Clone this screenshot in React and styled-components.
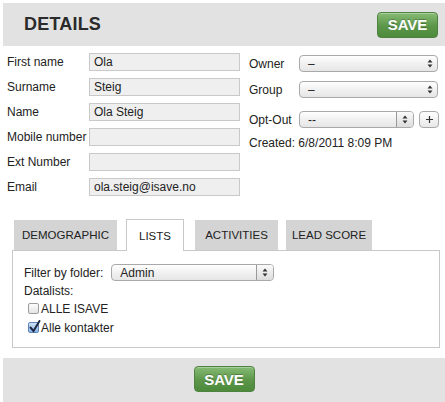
import styled, { createGlobalStyle } from 'styled-components';

const GlobalStyle = createGlobalStyle`
  body {
    margin: 0;
    background: #fff;
    font-family: "Liberation Sans", Arial, sans-serif;
    font-size: 12px;
    color: #222;
  }
`;

const Page = styled.div`
  width: 442px;
  padding: 3px 0 0 3px;
`;

const Bar = styled.div`
  height: ${({ $h }) => $h}px;
  background: #e2e2e2;
  display: flex;
  align-items: ${({ $top }) => ($top ? 'flex-start' : 'center')};
  justify-content: ${({ $center }) => ($center ? 'center' : 'space-between')};
  padding: ${({ $pad }) => $pad};
  box-sizing: border-box;
`;

const Title = styled.h1`
  margin: 0;
  font-size: 18px;
  font-weight: bold;
  color: #2b2b2b;
  letter-spacing: 0.2px;
`;

const SaveButton = styled.button`
  width: 61px;
  height: 26px;
  border: 1px solid #4e823f;
  border-radius: 4px;
  background: linear-gradient(#86bb74, #5c9649 55%, #4d8a3c);
  color: #fff;
  font-family: "Liberation Sans", Arial, sans-serif;
  font-size: 15px;
  font-weight: bold;
  text-shadow: 0 -1px 0 rgba(0, 0, 0, 0.25);
  box-shadow: inset 0 1px 0 rgba(255, 255, 255, 0.3);
  padding: 0;
`;

const FormArea = styled.div`
  display: flex;
  padding-top: 7px;
  height: 166px;
`;

const LeftCol = styled.div`
  width: 242px;
  padding-left: 4px;
  display: flex;
  flex-direction: column;
  gap: 7px;
`;

const FieldRow = styled.div`
  display: flex;
  align-items: center;
  height: 18px;
`;

const Label = styled.span`
  width: ${({ $w }) => $w}px;
  flex-shrink: 0;
  font-size: 12px;
  color: #222;
  white-space: nowrap;
`;

const TextInput = styled.input`
  width: 151px;
  height: 18px;
  box-sizing: border-box;
  border: 1px solid #c9c9c9;
  background: #efefef;
  font-family: "Liberation Sans", Arial, sans-serif;
  font-size: 12px;
  color: #222;
  padding: 0 4px;
  outline: none;
`;

const RightCol = styled.div`
  display: flex;
  flex-direction: column;
  padding-top: 2px;
`;

const SelectRow = styled.div`
  display: flex;
  align-items: center;
  height: 17px;
  margin-bottom: ${({ $mb }) => $mb}px;
`;

const FakeSelect = styled.div`
  width: ${({ $w }) => $w}px;
  height: 17px;
  box-sizing: border-box;
  border: 1px solid #a9a9a9;
  border-radius: 4px;
  background: linear-gradient(#ffffff, #f1f1f1 50%, #e6e6e6);
  display: flex;
  align-items: center;
  font-size: 12px;
  color: #222;
  padding-left: 8px;
  overflow: hidden;
`;

const SelectValue = styled.span`
  flex: 1;
`;

const ArrowCell = styled.span`
  width: ${({ $split }) => ($split ? 16 : 14)}px;
  height: 100%;
  display: flex;
  align-items: center;
  justify-content: center;
  border-left: ${({ $split }) => ($split ? '1px solid #9a9a9a' : 'none')};
  background: ${({ $split }) => ($split ? 'linear-gradient(#fafafa, #dcdcdc)' : 'transparent')};
`;

const PlusButton = styled.button`
  width: 20px;
  height: 17px;
  margin-left: 5px;
  padding: 0;
  border: 1px solid #a9a9a9;
  border-radius: 4px;
  background: linear-gradient(#ffffff, #e8e8e8);
  display: flex;
  align-items: center;
  justify-content: center;
`;

const Created = styled.div`
  font-size: 12px;
  color: #222;
`;

const TabsWrap = styled.div`
  margin: 0 5px 0 9px;
`;

const TabStrip = styled.div`
  display: flex;
  align-items: flex-end;
  padding-left: 2px;
  height: 31px;
`;

const Tab = styled.div`
  height: ${({ $active }) => ($active ? 32 : 30)}px;
  width: ${({ $w }) => $w}px;
  box-sizing: border-box;
  margin-right: ${({ $gap }) => $gap}px;
  margin-bottom: ${({ $active }) => ($active ? -1 : 0)}px;
  background: ${({ $active }) => ($active ? '#fff' : '#d4d4d4')};
  border: ${({ $active }) => ($active ? '1px solid #c8c8c8' : 'none')};
  border-bottom: none;
  display: flex;
  align-items: center;
  justify-content: center;
  font-size: 11.5px;
  color: #222;
  position: relative;
  z-index: 1;
`;

const Panel = styled.div`
  height: 98px;
  box-sizing: border-box;
  border: 1px solid #c8c8c8;
  padding: 13px 0 0 11px;
`;

const FilterRow = styled.div`
  display: flex;
  align-items: center;
  gap: 8px;
`;

const SmallText = styled.div`
  margin-top: 3px;
  line-height: 15px;
`;

const CheckRow = styled.label`
  display: flex;
  align-items: center;
  height: 19px;
  padding-left: 4px;
  font-size: 12px;
`;

const Box = styled.span`
  width: 11px;
  height: 11px;
  box-sizing: border-box;
  border: 1px solid ${({ $on }) => ($on ? '#5a86b8' : '#9d9d9d')};
  border-radius: 2px;
  background: ${({ $on }) =>
    $on ? 'linear-gradient(#cfe2f7, #8db6e6)' : 'linear-gradient(#fdfdfd, #e4e4e4)'};
  margin-right: 2px;
  position: relative;
  flex-shrink: 0;
`;

const CheckMark = styled.svg`
  position: absolute;
  left: 0;
  top: -3px;
`;

const Spacer = styled.div`
  height: ${({ $h }) => $h}px;
`;

const Arrows = () => (
  <svg width="6" height="9" viewBox="0 0 6 9">
    <path d="M3 0.5 L5.5 3.5 H0.5 Z" fill="#333" />
    <path d="M3 8.5 L5.5 5.5 H0.5 Z" fill="#333" />
  </svg>
);

const Select = ({ w, value, split }) => (
  <FakeSelect $w={w}>
    <SelectValue>{value}</SelectValue>
    <ArrowCell $split={split}>
      <Arrows />
    </ArrowCell>
  </FakeSelect>
);

const Check = ({ on, children }) => (
  <CheckRow>
    <Box $on={on}>
      {on && (
        <CheckMark width="12" height="13" viewBox="0 0 12 13">
          <path d="M1.5 7.5 L4.5 11 L10.5 1" stroke="#1d2a44" strokeWidth="2" fill="none" strokeLinecap="round" />
        </CheckMark>
      )}
    </Box>
    {children}
  </CheckRow>
);

const fields = [
  ['First name', 'Ola'],
  ['Surname', 'Steig'],
  ['Name', 'Ola Steig'],
  ['Mobile number', ''],
  ['Ext Number', ''],
  ['Email', 'ola.steig@isave.no'],
];

const tabs = [
  { name: 'DEMOGRAPHIC', w: 103, gap: 9 },
  { name: 'LISTS', w: 58, gap: 11, active: true },
  { name: 'ACTIVITIES', w: 83, gap: 8 },
  { name: 'LEAD SCORE', w: 86, gap: 0 },
];

export default function App() {
  return (
    <Page>
      <GlobalStyle />
      <Bar $h={43} $pad="0 7px 0 21px">
        <Title>DETAILS</Title>
        <SaveButton>SAVE</SaveButton>
      </Bar>

      <FormArea>
        <LeftCol>
          {fields.map(([label, value]) => (
            <FieldRow key={label}>
              <Label $w={82}>{label}</Label>
              <TextInput defaultValue={value} />
            </FieldRow>
          ))}
        </LeftCol>
        <RightCol>
          <SelectRow $mb={9}>
            <Label $w={50}>Owner</Label>
            <Select w={139} value="–" />
          </SelectRow>
          <SelectRow $mb={13}>
            <Label $w={50}>Group</Label>
            <Select w={139} value="–" />
          </SelectRow>
          <SelectRow $mb={8}>
            <Label $w={50}>Opt-Out</Label>
            <Select w={115} value="--" split />
            <PlusButton>
              <svg width="9" height="9" viewBox="0 0 9 9">
                <path d="M4.5 1 V8 M1 4.5 H8" stroke="#333" strokeWidth="1.2" />
              </svg>
            </PlusButton>
          </SelectRow>
          <Created>Created: 6/8/2011 8:09 PM</Created>
        </RightCol>
      </FormArea>

      <TabsWrap>
        <TabStrip>
          {tabs.map((t) => (
            <Tab key={t.name} $w={t.w} $gap={t.gap} $active={t.active}>
              {t.name}
            </Tab>
          ))}
        </TabStrip>
        <Panel>
          <FilterRow>
            <span>Filter by folder:</span>
            <Select w={163} value="Admin" split />
          </FilterRow>
          <SmallText>Datalists:</SmallText>
          <Check>ALLE ISAVE</Check>
          <Check on>Alle kontakter</Check>
        </Panel>
      </TabsWrap>

      <Spacer $h={10} />
      <Bar $h={44} $center $top $pad="8px 0 0 0">
        <SaveButton>SAVE</SaveButton>
      </Bar>
    </Page>
  );
}
